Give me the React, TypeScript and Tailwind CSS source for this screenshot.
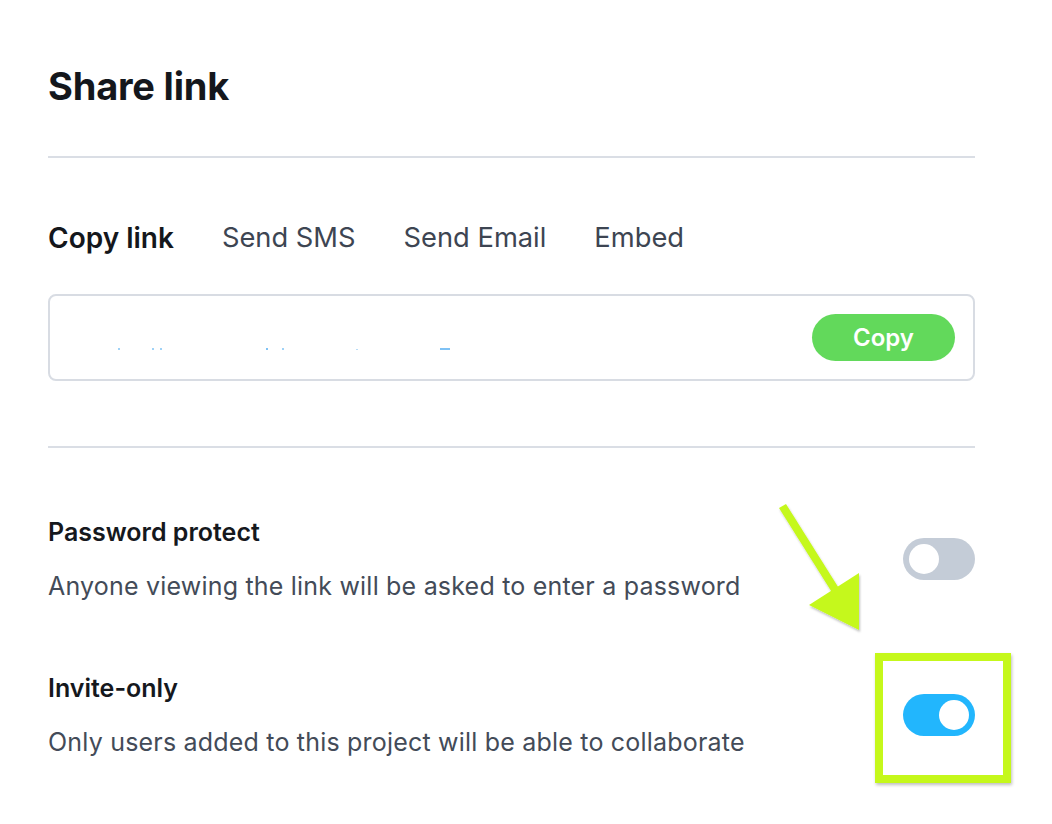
import React, { useState } from "react";

function Toggle({ on, onChange }: { on: boolean; onChange: () => void }) {
  return (
    <button
      type="button"
      onClick={onChange}
      className={`flex h-[42px] w-[72px] shrink-0 items-center rounded-full px-[6px] ${
        on ? "justify-end bg-[#22b6fd]" : "justify-start bg-[#c4ccd7]"
      }`}
    >
      <span className="block h-[30px] w-[30px] rounded-full bg-white" />
    </button>
  );
}

function OptionRow({
  title,
  desc,
  on,
  onChange,
}: {
  title: string;
  desc: string;
  on: boolean;
  onChange: () => void;
}) {
  return (
    <div className="flex items-center justify-between">
      <div className="flex flex-col gap-[22px]">
        <div className="text-[25px] font-semibold leading-[32px] text-[#15181d]">{title}</div>
        <div className="text-[25px] leading-[32px] tracking-[0.2px] text-[#434b58]">{desc}</div>
      </div>
      <Toggle on={on} onChange={onChange} />
    </div>
  );
}

export default function App() {
  const [tab, setTab] = useState("Copy link");
  const [password, setPassword] = useState(false);
  const [inviteOnly, setInviteOnly] = useState(true);
  const tabs = ["Copy link", "Send SMS", "Send Email", "Embed"];

  return (
    <div
      className="relative min-h-[824px] w-[1052px] overflow-hidden bg-white"
      style={{ fontFamily: "Inter, 'Noto Sans', sans-serif" }}
    >
      <div className="w-[927px] pl-[48px] box-content">
        <h1 className="pt-[62px] text-[38px] font-bold leading-[48px] tracking-[-0.2px] text-[#14171c]">
          Share link
        </h1>
        <div className="mt-[46px] h-[2px] bg-[#dadee5]" />

        {/* Tabs */}
        <div className="mt-[62px] flex gap-[48px] leading-[36px]">
          {tabs.map((t) => (
            <button
              key={t}
              type="button"
              onClick={() => setTab(t)}
              className={
                tab === t
                  ? "text-[28px] font-semibold text-[#14171c]"
                  : "text-[27.3px] text-[#3d4552]"
              }
            >
              {t}
            </button>
          ))}
        </div>

        {/* Link box */}
        <div className="mt-[38px] flex h-[87px] items-center justify-between rounded-[8px] border-2 border-[#d8dce3] pr-[18px]">
          <div className="flex h-full items-end pb-[29px] pl-[68px]">
            <span className="h-[2px] w-[2px] bg-[#9fd2f7]" />
            <span className="ml-[32px] h-[2px] w-[2px] bg-[#9fd2f7]" />
            <span className="ml-[6px] h-[2px] w-[2px] bg-[#9fd2f7]" />
            <span className="ml-[104px] h-[2px] w-[2px] bg-[#7fc2f5]" />
            <span className="ml-[14px] h-[2px] w-[2px] bg-[#9fd2f7]" />
            <span className="ml-[72px] h-[1px] w-[2px] bg-[#b8dcf7]" />
            <span className="ml-[82px] h-[2px] w-[10px] bg-[#7fc2f5]" />
          </div>
          <button
            type="button"
            className="flex h-[47px] w-[143px] items-center justify-center rounded-full bg-[#62d95b] text-[24px] font-semibold text-white"
          >
            Copy
          </button>
        </div>

        <div className="mt-[65px] h-[2px] bg-[#dadee5]" />

        <div className="mt-[68px]">
          <OptionRow
            title="Password protect"
            desc="Anyone viewing the link will be asked to enter a password"
            on={password}
            onChange={() => setPassword(!password)}
          />
        </div>
        <div className="mt-[70px]">
          <OptionRow
            title="Invite-only"
            desc="Only users added to this project will be able to collaborate"
            on={inviteOnly}
            onChange={() => setInviteOnly(!inviteOnly)}
          />
        </div>
      </div>

      {/* Annotation: highlight box */}
      <div className="pointer-events-none absolute left-[875px] top-[653px] h-[130px] w-[136px] border-[8px] border-[#c5f81b] shadow-[1px_2px_3px_rgba(0,0,0,0.25)]" />

      {/* Annotation: arrow */}
      <svg
        className="pointer-events-none absolute left-[770px] top-[495px]"
        width="110"
        height="150"
        viewBox="0 0 110 150"
      >
        <defs>
          <filter id="sh" x="-20%" y="-20%" width="140%" height="140%">
            <feDropShadow dx="1" dy="2" stdDeviation="1.2" floodColor="#000" floodOpacity="0.25" />
          </filter>
        </defs>
        <g filter="url(#sh)" fill="#c5f81b">
          <polygon points="9,13 16,9 70,95 63,99" />
          <polygon points="39,110 89,78 89,135" />
        </g>
      </svg>
    </div>
  );
}
